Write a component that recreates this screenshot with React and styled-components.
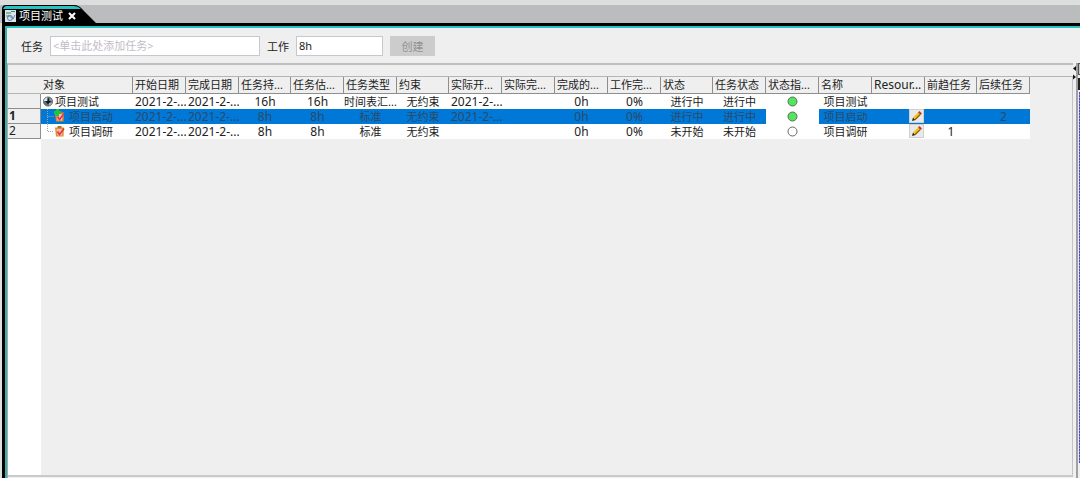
import React from 'react';
import styled, { createGlobalStyle } from 'styled-components';

const GlobalStyle = createGlobalStyle`
  * {
    box-sizing: border-box;
  }

  html,
  body,
  #root {
    height: 100%;
    margin: 0;
  }

  body,
  input,
  button {
    font-family: 'Noto Sans', 'Noto Sans CJK SC', sans-serif;
    font-size: 11px;
    color: #222;
  }
`;

const Window = styled.div`
  display: flex;
  flex-direction: column;
  height: 100%;
  padding-top: 5px;
  background: #dcdddd;
  overflow: hidden;
`;

const TabBar = styled.div`
  display: flex;
  flex: none;
  height: 18px;
  padding-left: 2px;
  background: #bbbcbe;
`;

const Tab = styled.div`
  position: relative;
  display: flex;
  align-items: center;
  width: 94px;
  height: 18px;
  padding: 3px 0 0 3px;
  gap: 3px;
  color: #fff;
  line-height: 15px;
  white-space: nowrap;
`;

const TabShape = styled.svg`
  position: absolute;
  inset: 0;
`;

const TabIcon = styled.svg`
  position: relative;
  flex: none;
`;

const TabTitle = styled.span`
  position: relative;
`;

const CloseButton = styled.button`
  position: relative;
  display: flex;
  padding: 0;
  margin-left: 2px;
  border: none;
  background: transparent;
`;

const Frame = styled.div`
  display: flex;
  flex: 1;
  min-height: 0;
  margin-left: 2px;
  border-top: 3px solid #000;
  border-left: 3px solid #000;
  background: #efefef;
`;

const Content = styled.main`
  display: flex;
  flex: 1;
  flex-direction: column;
  min-width: 0;
  border-top: 2px solid #25c4c2;
  border-left: 2px solid #3aaeaa;
`;

const Toolbar = styled.form`
  display: flex;
  flex: none;
  align-items: center;
  height: 35px;
  padding-left: 14px;
`;

const Field = styled.label`
  display: flex;
  align-items: center;
  gap: 7px;
  margin-right: 7px;
`;

const TextInput = styled.input`
  width: ${props => props.$width};
  height: 20px;
  padding: 0 2px;
  border: 1px solid #c6c8cd;
  background: #fff;
  outline: none;

  &::placeholder {
    color: #c3bcc6;
    opacity: 1;
  }
`;

const CreateButton = styled.button`
  width: 45px;
  height: 20px;
  padding: 0;
  border: none;
  background: #cccccc;

  &:disabled {
    color: #939393;
  }
`;

const Split = styled.div`
  display: flex;
  flex: 1;
  min-height: 0;
`;

const GridPane = styled.section`
  display: flex;
  flex: 1;
  flex-direction: column;
  min-width: 0;
  padding-top: 11px;
  border-top: 2px solid #bfbfbf;
  border-left: 1px solid #aaa;
`;

const GridScroll = styled.div`
  display: flex;
  flex: 1;
  flex-direction: column;
  min-height: 0;
  margin-bottom: 1px;
  border-top: 1px solid #b4b4b8;
  border-right: 1px solid #c4c4c8;
  border-bottom: 2px solid #c9c9ce;
  overflow: hidden;
`;

const Table = styled.table`
  flex: none;
  width: 1022px;
  border-collapse: separate;
  border-spacing: 0;
  table-layout: fixed;
`;

const HeadCell = styled.th`
  height: 17px;
  padding: 0 0 0 ${props => (props.$plain ? 0 : 2)}px;
  border-right: 1px solid ${props => (props.$plain ? 'transparent' : '#8e8e8e')};
  border-bottom: 1px solid ${props => (props.$plain ? '#b4b4b4' : '#8e8e8e')};
  font-size: ${props => (props.$latin ? 12 : 11)}px;
  font-weight: 400;
  line-height: 16px;
  text-align: left;
  white-space: nowrap;
  overflow: hidden;
`;

const Row = styled.tr`
  height: 15px;
  color: ${props => (props.$selected ? '#2c4a68' : '#222')};
  background: ${props => (props.$selected ? '#0078d7' : '#fff')};
`;

const RowNumber = styled.th`
  height: 15px;
  padding: 0 0 0 1px;
  border-right: 1px solid #8e8e8e;
  border-bottom: 1px solid #8e8e8e;
  background: #efefef;
  color: #222;
  font-size: 12px;
  font-weight: ${props => (props.$selected ? 700 : 400)};
  line-height: 14px;
  text-align: left;
`;

const Cell = styled.td`
  height: 15px;
  padding: 0 0 0 ${props => (props.$align ? 2 : 0)}px;
  background: ${props => (props.$blank ? '#fff' : 'transparent')};
  font-size: ${props => (props.$latin ? 12 : 11)}px;
  line-height: 14px;
  text-align: ${props => props.$align || 'center'};
  white-space: nowrap;
  overflow: hidden;
`;

const ObjectLabel = styled.div`
  display: flex;
  align-items: center;
  gap: ${props => (props.$child ? 4 : 2)}px;
  height: 15px;
  padding-left: ${props => (props.$child ? 2 : 0)}px;
`;

const StatusDot = styled.svg`
  display: block;
  margin: 0 auto;
`;

const ResourceBox = styled.div`
  display: flex;
  justify-content: flex-end;
  height: 15px;
  padding-right: 1px;
`;

const EditButton = styled.button`
  display: flex;
  align-items: center;
  justify-content: center;
  width: 15px;
  height: 14px;
  padding: 0;
  border: 1px solid #d0d0d0;
  background: #e9e9e9;
`;

const Gutter = styled.div`
  flex: 1;
  width: 33px;
  background: #fff;
`;

const Sash = styled.div`
  flex: none;
  width: 3px;
  padding-top: 3px;
`;

const SashArrows = styled.svg`
  display: block;
`;

const ChartPane = styled.aside`
  flex: none;
  width: 4px;
  border-left: 2px solid #a0a0a4;
  background: #efefef;
`;

const ChartHead = styled.div`
  height: 12px;
  border: 1px solid #555;
  border-right: none;
  background: #c8c8c8;
`;

const ChartScale = styled.div`
  height: 12px;
  margin: 3px 0 2px;
  background: #222;
`;

const ChartBody = styled.div`
  height: calc(100% - 44px);
  margin-left: 1px;
  background: repeating-linear-gradient(#4a46d6 0 2px, #8e8de8 2px 3px);
`;

const COLUMNS = [
  { key: 'start', title: '开始日期', width: 53, align: 'left', latin: true },
  { key: 'finish', title: '完成日期', width: 53, align: 'left', latin: true },
  { key: 'duration', title: '任务持...', width: 52, latin: true },
  { key: 'estimate', title: '任务估...', width: 53, latin: true },
  { key: 'type', title: '任务类型', width: 53 },
  { key: 'constraint', title: '约束', width: 52 },
  { key: 'actualStart', title: '实际开...', width: 53, align: 'left', latin: true },
  { key: 'actualFinish', title: '实际完...', width: 53, latin: true },
  { key: 'workDone', title: '完成的...', width: 53, latin: true },
  { key: 'percent', title: '工作完...', width: 53, latin: true },
  { key: 'state', title: '状态', width: 52 },
  { key: 'taskState', title: '任务状态', width: 53 },
  { key: 'indicator', title: '状态指...', width: 53 },
  { key: 'name', title: '名称', width: 53 },
  { key: 'resource', title: 'Resour...', width: 53, latin: true },
  { key: 'before', title: '前趋任务', width: 52, latin: true },
  { key: 'after', title: '后续任务', width: 53, latin: true },
];

const ROWS = [
  {
    number: '',
    name: '项目测试',
    start: '2021-2-...',
    finish: '2021-2-...',
    duration: '16h',
    estimate: '16h',
    type: '时间表汇...',
    constraint: '无约束',
    actualStart: '2021-2-...',
    workDone: '0h',
    percent: '0%',
    state: '进行中',
    taskState: '进行中',
    active: true,
  },
  {
    number: '1',
    name: '项目启动',
    start: '2021-2-...',
    finish: '2021-2-...',
    duration: '8h',
    estimate: '8h',
    type: '标准',
    constraint: '无约束',
    actualStart: '2021-2-...',
    workDone: '0h',
    percent: '0%',
    state: '进行中',
    taskState: '进行中',
    after: '2',
    active: true,
    child: true,
    selected: true,
  },
  {
    number: '2',
    name: '项目调研',
    start: '2021-2-...',
    finish: '2021-2-...',
    duration: '8h',
    estimate: '8h',
    type: '标准',
    constraint: '无约束',
    workDone: '0h',
    percent: '0%',
    state: '未开始',
    taskState: '未开始',
    before: '1',
    child: true,
    last: true,
  },
];

function ProjectIcon() {
  return (
    <svg width="10" height="11" viewBox="0 0 11 11">
      <circle cx="5.5" cy="5.5" r="5" fill="#65727c" stroke="#59656e" />
      <path d="M1 5a4.500 4.500 0 0 1 4-4v4z" fill="#dce4e8" />
      <path d="M7 1.500a4.500 4.500 0 0 1 3 3.500H8z" fill="#8e9ba4" />
      <path d="M6 7h4a4.500 4.500 0 0 1-3 3z" fill="#a9b6be" />
      <path d="M5 2h1.500v3H9L5.500 8.500 2.500 5H5z" fill="#10161b" />
    </svg>
  );
}

function TaskIcon({ started, last }) {
  return (
    <svg width="20" height="15" viewBox="0 0 20 15">
      <path
        d={last ? 'M2.500 0v7.500H9' : 'M2.500 0v15M2.500 7.500H9'}
        fill="none"
        stroke="#9aa0a8"
        strokeDasharray="1 1"
      />
      <path d="M10 3.500h9l-.5 9h-7.500z" fill="#e58a2c" />
      <path d="M11.500 5h6l-.5 6.500h-4.500z" fill="#f3bfae" />
      <path d="M12.500 7.500l2 3 4.500-6" fill="none" stroke="#e0364c" strokeWidth="1.600" />
      <path d="M12.500 2h4v2h-4z" fill="#b0741f" />
      {started && <path d="M11 0h3v2h2v3h-2v2h-3V5H9V2h2z" fill="#20c43a" />}
    </svg>
  );
}

function PencilIcon() {
  return (
    <svg width="11" height="12" viewBox="0 0 11 12">
      <path d="M1 11l1-3.500 2.500 2.500z" fill="#222" />
      <path d="M2 7.500L7 2.500 9.500 5l-5 5z" fill="#f2c21e" />
      <path d="M4.500 10L9.500 5l-.8-.8-5 5z" fill="#7a5410" />
      <path d="M7 2.500L8.500 1 11 3.500 9.500 5z" fill="#b8402c" />
    </svg>
  );
}

function CellContent({ column, row }) {
  if (column.key === 'indicator') {
    return (
      <StatusDot width="11" height="11" viewBox="0 0 11 11">
        <circle cx="5.5" cy="5.5" r="4.5" fill={row.active ? '#4fe85a' : '#fff'} stroke="#666" />
      </StatusDot>
    );
  }
  if (column.key === 'resource' && row.child) {
    return (
      <ResourceBox>
        <EditButton type="button" aria-label="Resource">
          <PencilIcon />
        </EditButton>
      </ResourceBox>
    );
  }
  return row[column.key] || null;
}

function TaskTable() {
  return (
    <Table>
      <colgroup>
        <col style={{ width: 33 }} />
        <col style={{ width: 92 }} />
        {COLUMNS.map(column => (
          <col key={column.key} style={{ width: column.width }} />
        ))}
      </colgroup>
      <thead>
        <tr>
          <HeadCell $plain />
          <HeadCell>对象</HeadCell>
          {COLUMNS.map(column => (
            <HeadCell key={column.key} $latin={column.key === 'resource'}>
              {column.title}
            </HeadCell>
          ))}
        </tr>
      </thead>
      <tbody>
        {ROWS.map(row => (
          <Row key={row.name} $selected={row.selected}>
            <RowNumber $selected={row.selected}>{row.number}</RowNumber>
            <Cell $align="left">
              <ObjectLabel $child={row.child}>
                {row.child ? <TaskIcon started={row.active} last={row.last} /> : <ProjectIcon />}
                {row.name}
              </ObjectLabel>
            </Cell>
            {COLUMNS.map(column => (
              <Cell
                key={column.key}
                $align={column.align}
                $latin={column.latin}
                $blank={column.key === 'indicator'}
              >
                <CellContent column={column} row={row} />
              </Cell>
            ))}
          </Row>
        ))}
      </tbody>
    </Table>
  );
}

function App() {
  return (
    <>
      <GlobalStyle />
      <Window>
        <TabBar>
          <Tab>
            <TabShape width="94" height="18" viewBox="0 0 94 18">
              <path d="M0 18V4Q0 0 4 0H72Q77 0 81 5L94 18z" fill="#000" />
              <path d="M1 4Q2 1 4 1H72Q76 1 79 4z" fill="#25c4c2" />
            </TabShape>
            <TabIcon width="11" height="12" viewBox="0 0 11 12">
              <path d="M0 0h11v12H0z" fill="#d8e4ea" />
              <path d="M1 3h5M1 6h3M6 1.500h4" stroke="#3b8a5b" />
              <circle cx="5" cy="8" r="2.500" fill="none" stroke="#4e7fb0" />
              <path d="M3 5l5 4 2-4" fill="none" stroke="#75879a" />
            </TabIcon>
            <TabTitle>项目测试</TabTitle>
            <CloseButton type="button" aria-label="关闭">
              <svg width="8" height="8" viewBox="0 0 8 8">
                <path d="M1 1l6 6M7 1L1 7" stroke="#fff" strokeWidth="2" />
              </svg>
            </CloseButton>
          </Tab>
        </TabBar>
        <Frame>
          <Content>
            <Toolbar>
              <Field>
                任务
                <TextInput $width="210px" placeholder="<单击此处添加任务>" />
              </Field>
              <Field>
                工作
                <TextInput $width="87px" defaultValue="8h" />
              </Field>
              <CreateButton type="submit" disabled>
                创建
              </CreateButton>
            </Toolbar>
            <Split>
              <GridPane>
                <GridScroll>
                  <TaskTable />
                  <Gutter />
                </GridScroll>
              </GridPane>
              <Sash>
                <SashArrows width="3" height="14" viewBox="0 0 3 14">
                  <path d="M3 0v5L0 2.500zM0 8.500v5L3 11z" fill="#111" />
                </SashArrows>
              </Sash>
              <ChartPane>
                <ChartHead />
                <ChartScale />
                <ChartBody />
              </ChartPane>
            </Split>
          </Content>
        </Frame>
      </Window>
    </>
  );
}

export default App;
